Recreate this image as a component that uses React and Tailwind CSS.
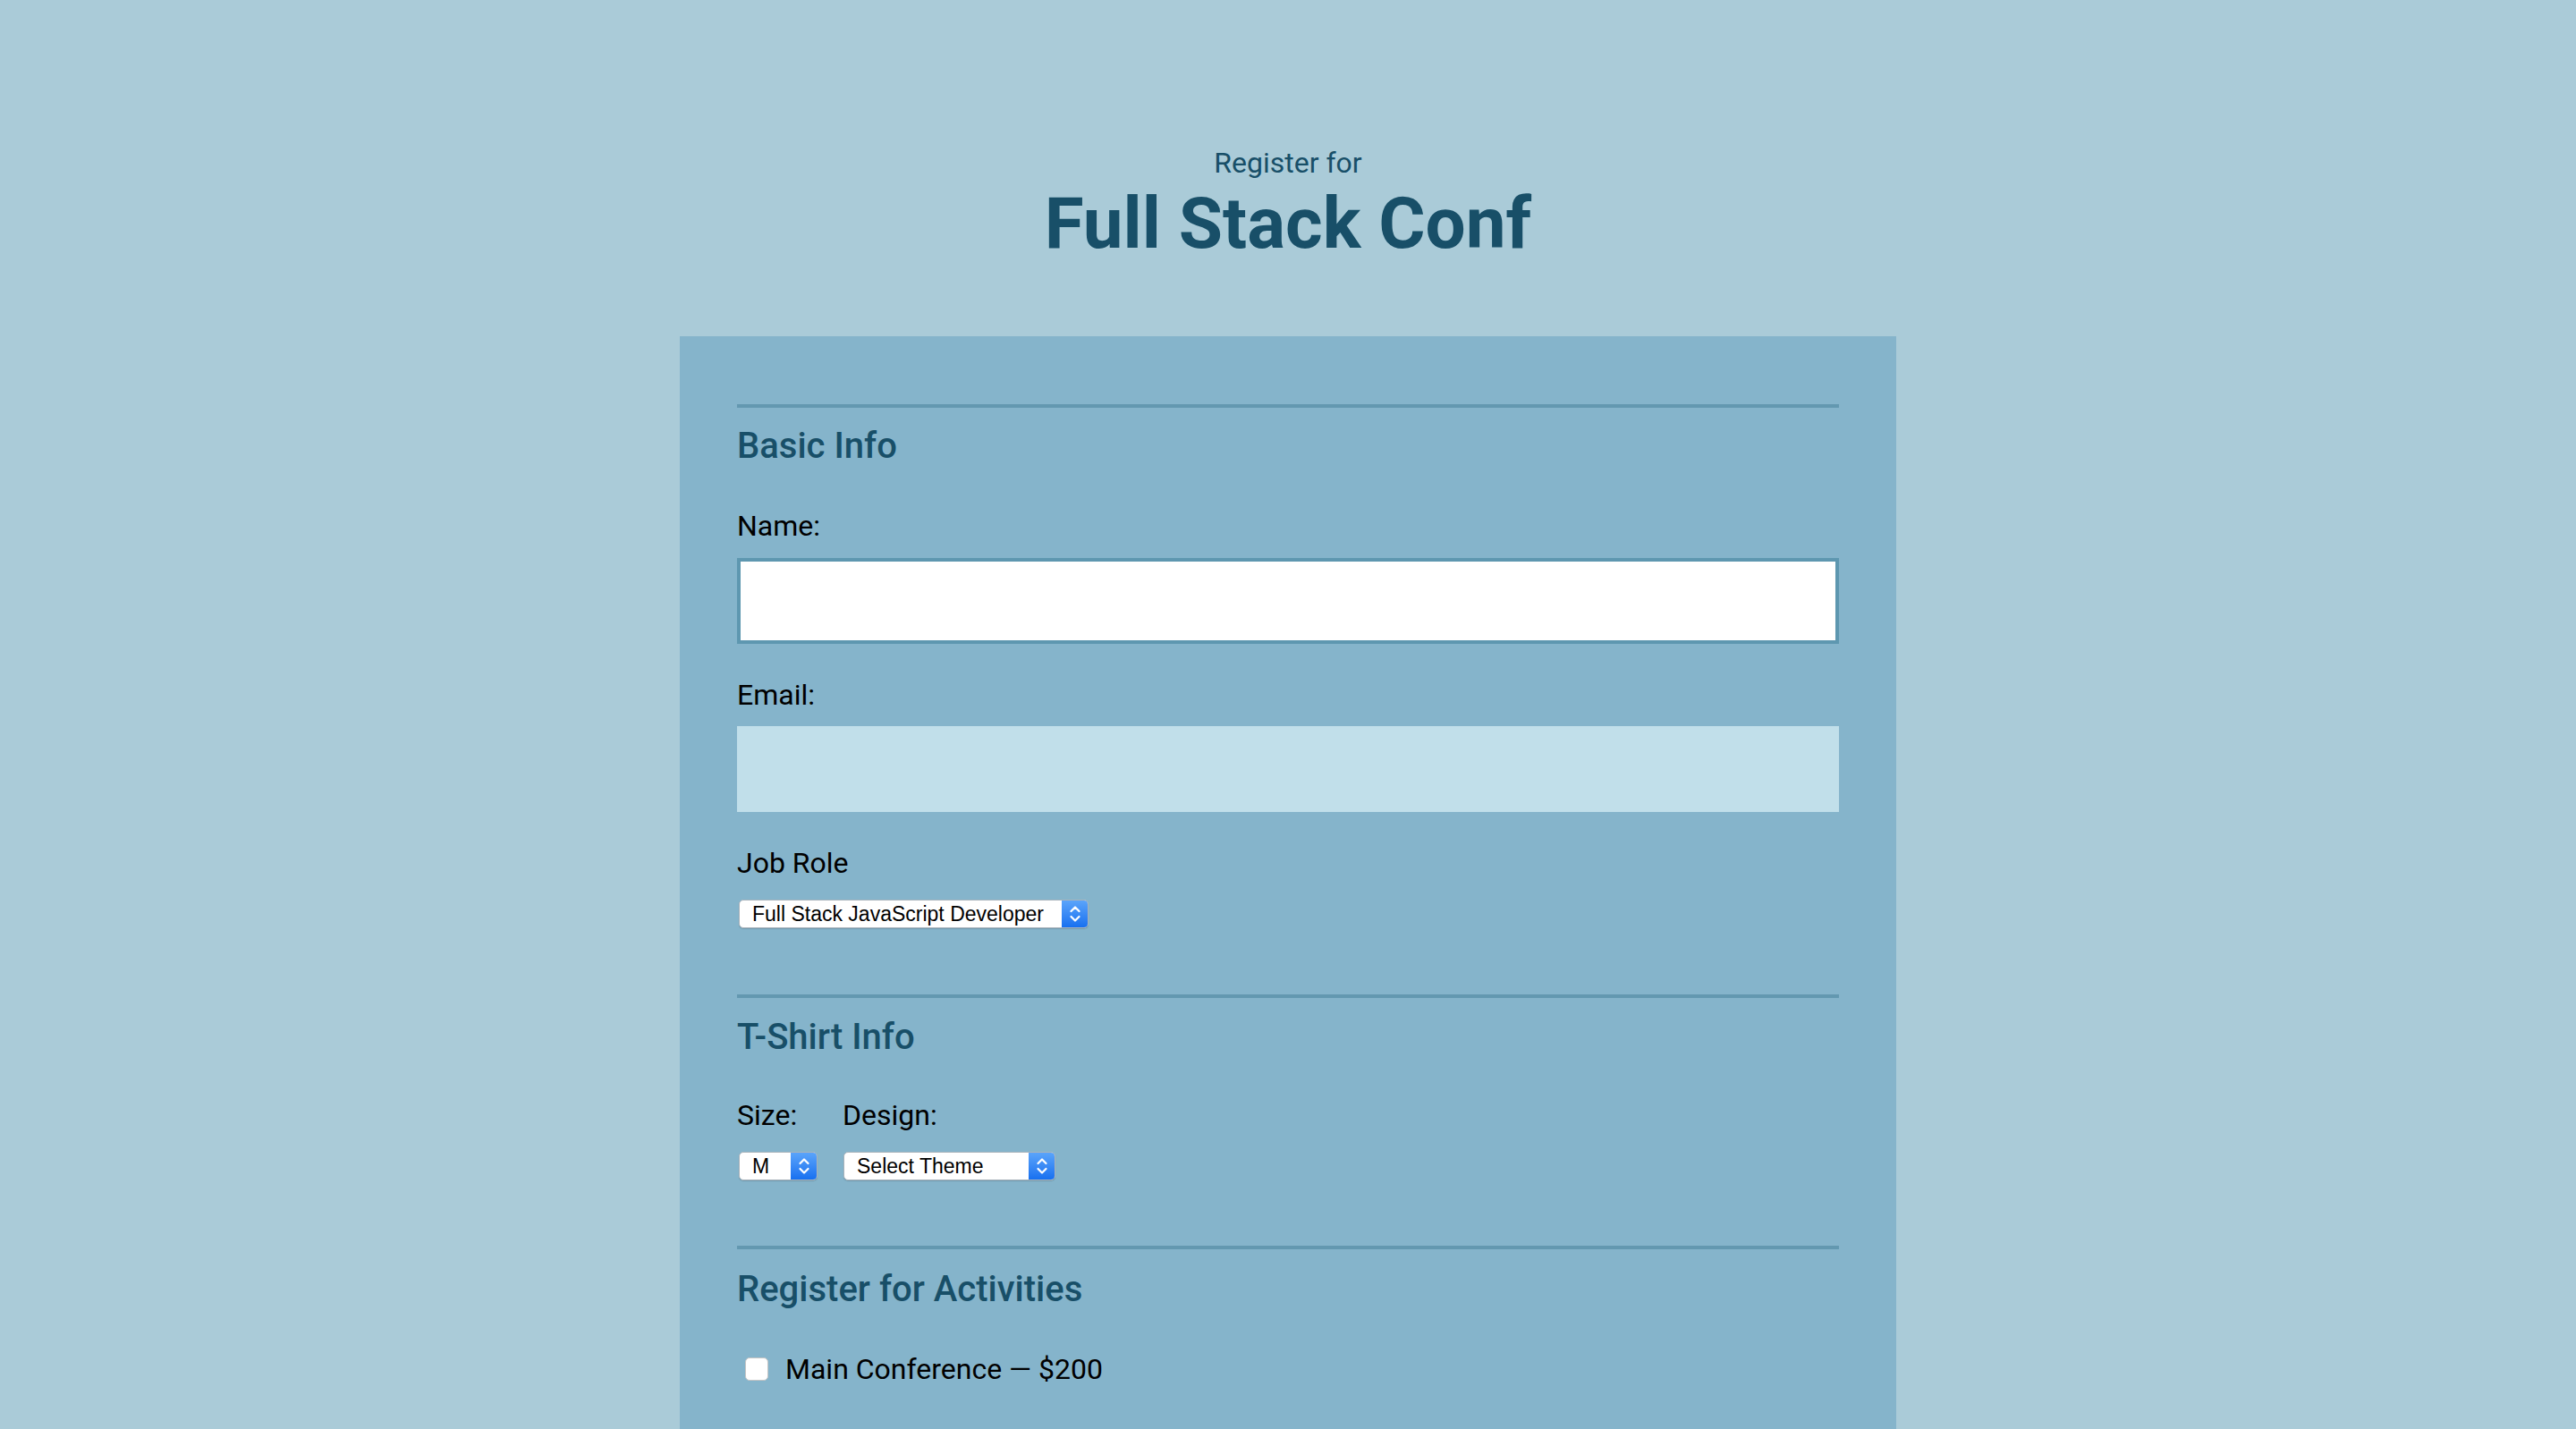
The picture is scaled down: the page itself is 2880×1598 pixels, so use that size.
import React from "react";

function Chevrons() {
  return (
    <svg width="14" height="22" viewBox="0 0 14 22" fill="none">
      <path d="M2.5 8 L7 3.5 L11.5 8" stroke="white" strokeWidth="2.2" strokeLinecap="round" strokeLinejoin="round" />
      <path d="M2.5 14 L7 18.5 L11.5 14" stroke="white" strokeWidth="2.2" strokeLinecap="round" strokeLinejoin="round" />
    </svg>
  );
}

function FakeSelect({ value, width }) {
  return (
    <div
      className={`flex h-[32px] items-stretch rounded-[5px] border border-[#a9b3bb] bg-white shadow-[0_1px_1px_rgba(0,0,0,0.15)] ${width}`}
    >
      <div className="flex flex-1 items-center pl-[14px] font-['Liberation_Sans',Arial,sans-serif] text-[23px] leading-none text-black">
        {value}
      </div>
      <div className="flex w-[29px] items-center justify-center rounded-r-[4px] bg-gradient-to-b from-[#5aa4fa] to-[#1670f0]">
        <Chevrons />
      </div>
    </div>
  );
}

function Legend({ children, className = "" }) {
  return (
    <h2 className={`text-[40px] font-medium leading-[40px] text-[#184f68] ${className}`}>{children}</h2>
  );
}

function Label({ children, className = "" }) {
  return <div className={`text-[32px] leading-[32px] text-black ${className}`}>{children}</div>;
}

function Activity({ text }) {
  return (
    <div className="flex items-center pl-[9px]">
      <div className="h-[26px] w-[26px] rounded-[5px] border border-[#c4c4c4] bg-white" />
      <span className="ml-[19px] text-[32px] leading-[32px] text-black">{text}</span>
    </div>
  );
}

export default function App() {
  return (
    <div className="flex h-screen flex-col overflow-hidden bg-[#aacbd8] font-['Roboto','Noto_Sans',sans-serif]">
      <header className="pt-[166px] text-center text-[#184f68]">
        <p className="text-[32px] leading-[32px]">Register for</p>
        <h1 className="mt-[12px] text-[80px] font-bold leading-[80px]">Full Stack Conf</h1>
      </header>

      <form className="mx-auto mt-[86px] w-[1360px] flex-1 bg-[#85b4cb] px-[64px] pt-[76px]">
        <fieldset className="border-t-[4px] border-[#6398b0]">
          <Legend className="mt-[23px]">Basic Info</Legend>
          <Label className="mt-[53px]">Name:</Label>
          <div className="mt-[20px] h-[96px] w-full border-[4px] border-[#5e97b0] bg-white" />
          <Label className="mt-[41px]">Email:</Label>
          <div className="mt-[19px] h-[96px] w-full bg-[#c1dfea]" />
          <Label className="mt-[41px]">Job Role</Label>
          <div className="mt-[25px] pl-[2px]">
            <FakeSelect value="Full Stack JavaScript Developer" width="w-[391px]" />
          </div>
        </fieldset>

        <fieldset className="mt-[74px] border-t-[4px] border-[#6398b0]">
          <Legend className="mt-[24px]">T-Shirt Info</Legend>
          <div className="mt-[51px] flex gap-[28px]">
            <div className="flex flex-col">
              <Label>Size:</Label>
              <div className="mt-[25px] pl-[2px]">
                <FakeSelect value="M" width="w-[88px]" />
              </div>
            </div>
            <div className="flex flex-col">
              <Label>Design:</Label>
              <div className="mt-[25px] pl-[1px]">
                <FakeSelect value="Select Theme" width="w-[237px]" />
              </div>
            </div>
          </div>
        </fieldset>

        <fieldset className="mt-[73px] border-t-[4px] border-[#6398b0]">
          <Legend className="mt-[25px]">Register for Activities</Legend>
          <div className="mt-[53px] flex flex-col gap-[30px]">
            <Activity text="Main Conference — $200" />
          </div>
        </fieldset>
      </form>
    </div>
  );
}
